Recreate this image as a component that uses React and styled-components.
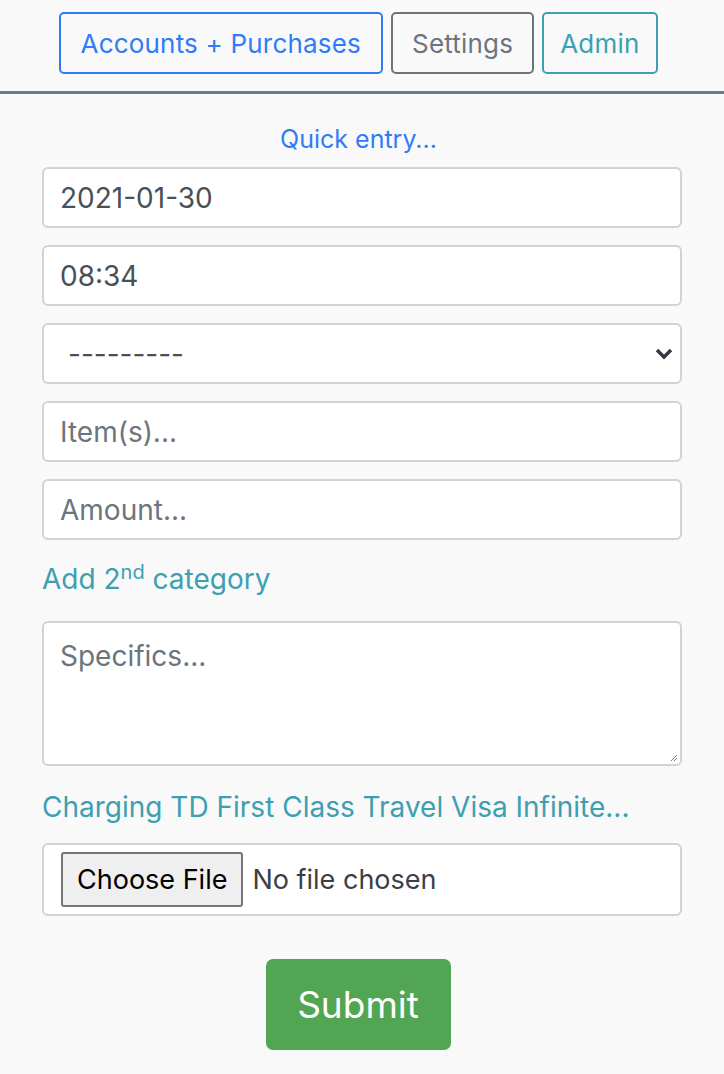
import React from 'react'
import styled, { createGlobalStyle } from 'styled-components'

const COLORS = {
  primary: '#2f7cf6',
  secondary: '#6c757d',
  info: '#3d9fb2',
  text: '#495057',
  placeholder: '#6c757d',
  border: '#ced4da',
  success: '#52a552',
}

const GlobalStyle = createGlobalStyle`
  html, body {
    margin: 0;
    padding: 0;
    background: #f9f9f9;
    font-family: Inter, "Noto Sans", "Liberation Sans", sans-serif;
  }
  * { box-sizing: border-box; }
`

const Nav = styled.nav`
  display: flex;
  justify-content: center;
  gap: 8px;
  padding: 12px 8px 17px 0;
  border-bottom: 3px solid #6e7b8b;
`
const NavButton = styled.button`
  height: 62px;
  padding: 0 ${p => p.pad}px;
  font: inherit;
  font-size: 26px;
  letter-spacing: 0.2px;
  color: ${p => p.color};
  background: transparent;
  border: 2px solid ${p => p.color};
  border-radius: 5px;
`
const Form = styled.form`
  display: flex;
  flex-direction: column;
  padding: 0 42px;
`
const QuickEntry = styled.a`
  align-self: center;
  margin: 30px 7px 13px 0;
  font-size: 25px;
  line-height: 30px;
  color: ${COLORS.primary};
`
const Field = styled.div`
  display: flex;
  align-items: center;
  justify-content: space-between;
  height: ${p => p.height || 61}px;
  margin-bottom: 17px;
  padding: 0 16px;
  font-size: 28px;
  color: ${p => (p.placeholder ? COLORS.placeholder : COLORS.text)};
  background: #fff;
  border: 2px solid ${COLORS.border};
  border-radius: 6px;
`
const Select = styled(Field)`
  padding: 0 7px 0 24px;
`
const TextArea = styled(Field)`
  position: relative;
  align-items: flex-start;
  padding-top: 16px;
`
const Grip = styled.svg`
  position: absolute;
  right: 2px;
  bottom: 2px;
`
const InfoLink = styled.a`
  margin: ${p => p.margin};
  font-size: 28px;
  line-height: 32px;
  color: ${COLORS.info};

  sup {
    font-size: 20px;
    line-height: 0;
  }
`
const FileField = styled(Field)`
  justify-content: flex-start;
  gap: 9px;
  height: 73px;
  padding: 0 17px;
  font-size: 27px;
  color: #3c3f44;
`
const FileButton = styled.span`
  display: flex;
  align-items: center;
  height: 55px;
  padding: 0 14px;
  color: #000;
  background: #efefef;
  border: 2px solid #767676;
  border-radius: 3px;
`
const Submit = styled.button`
  align-self: center;
  width: 185px;
  height: 91px;
  margin: 26px 8px 0 0;
  font: inherit;
  font-size: 37px;
  color: #fff;
  background: ${COLORS.success};
  border: none;
  border-radius: 7px;
`

const Chevron = () => (
  <svg width="18" height="12" viewBox="0 0 18 12">
    <path d="M2 2l7 7 7-7" fill="none" stroke="#343a40" strokeWidth="3.5" />
  </svg>
)

export default function App() {
  return (
    <>
      <GlobalStyle />
      <Nav>
        <NavButton color={COLORS.primary} pad={20}>Accounts + Purchases</NavButton>
        <NavButton color={COLORS.secondary} pad={19}>Settings</NavButton>
        <NavButton color={COLORS.info} pad={16}>Admin</NavButton>
      </Nav>
      <Form onSubmit={e => e.preventDefault()}>
        <QuickEntry>Quick entry...</QuickEntry>
        <Field>2021-01-30</Field>
        <Field>08:34</Field>
        <Select>
          <span>---------</span>
          <Chevron />
        </Select>
        <Field placeholder>Item(s)...</Field>
        <Field placeholder>Amount...</Field>
        <InfoLink margin="6px 0 26px">
          Add 2<sup>nd</sup> category
        </InfoLink>
        <TextArea placeholder height={145}>
          Specifics...
          <Grip width="8" height="8" viewBox="0 0 8 8">
            <path d="M7 1L1 7M7 4L4 7" stroke="#777" strokeWidth="1" />
          </Grip>
        </TextArea>
        <InfoLink margin="8px 0 20px">Charging TD First Class Travel Visa Infinite...</InfoLink>
        <FileField>
          <FileButton>Choose File</FileButton>
          No file chosen
        </FileField>
        <Submit type="submit">Submit</Submit>
      </Form>
    </>
  )
}
